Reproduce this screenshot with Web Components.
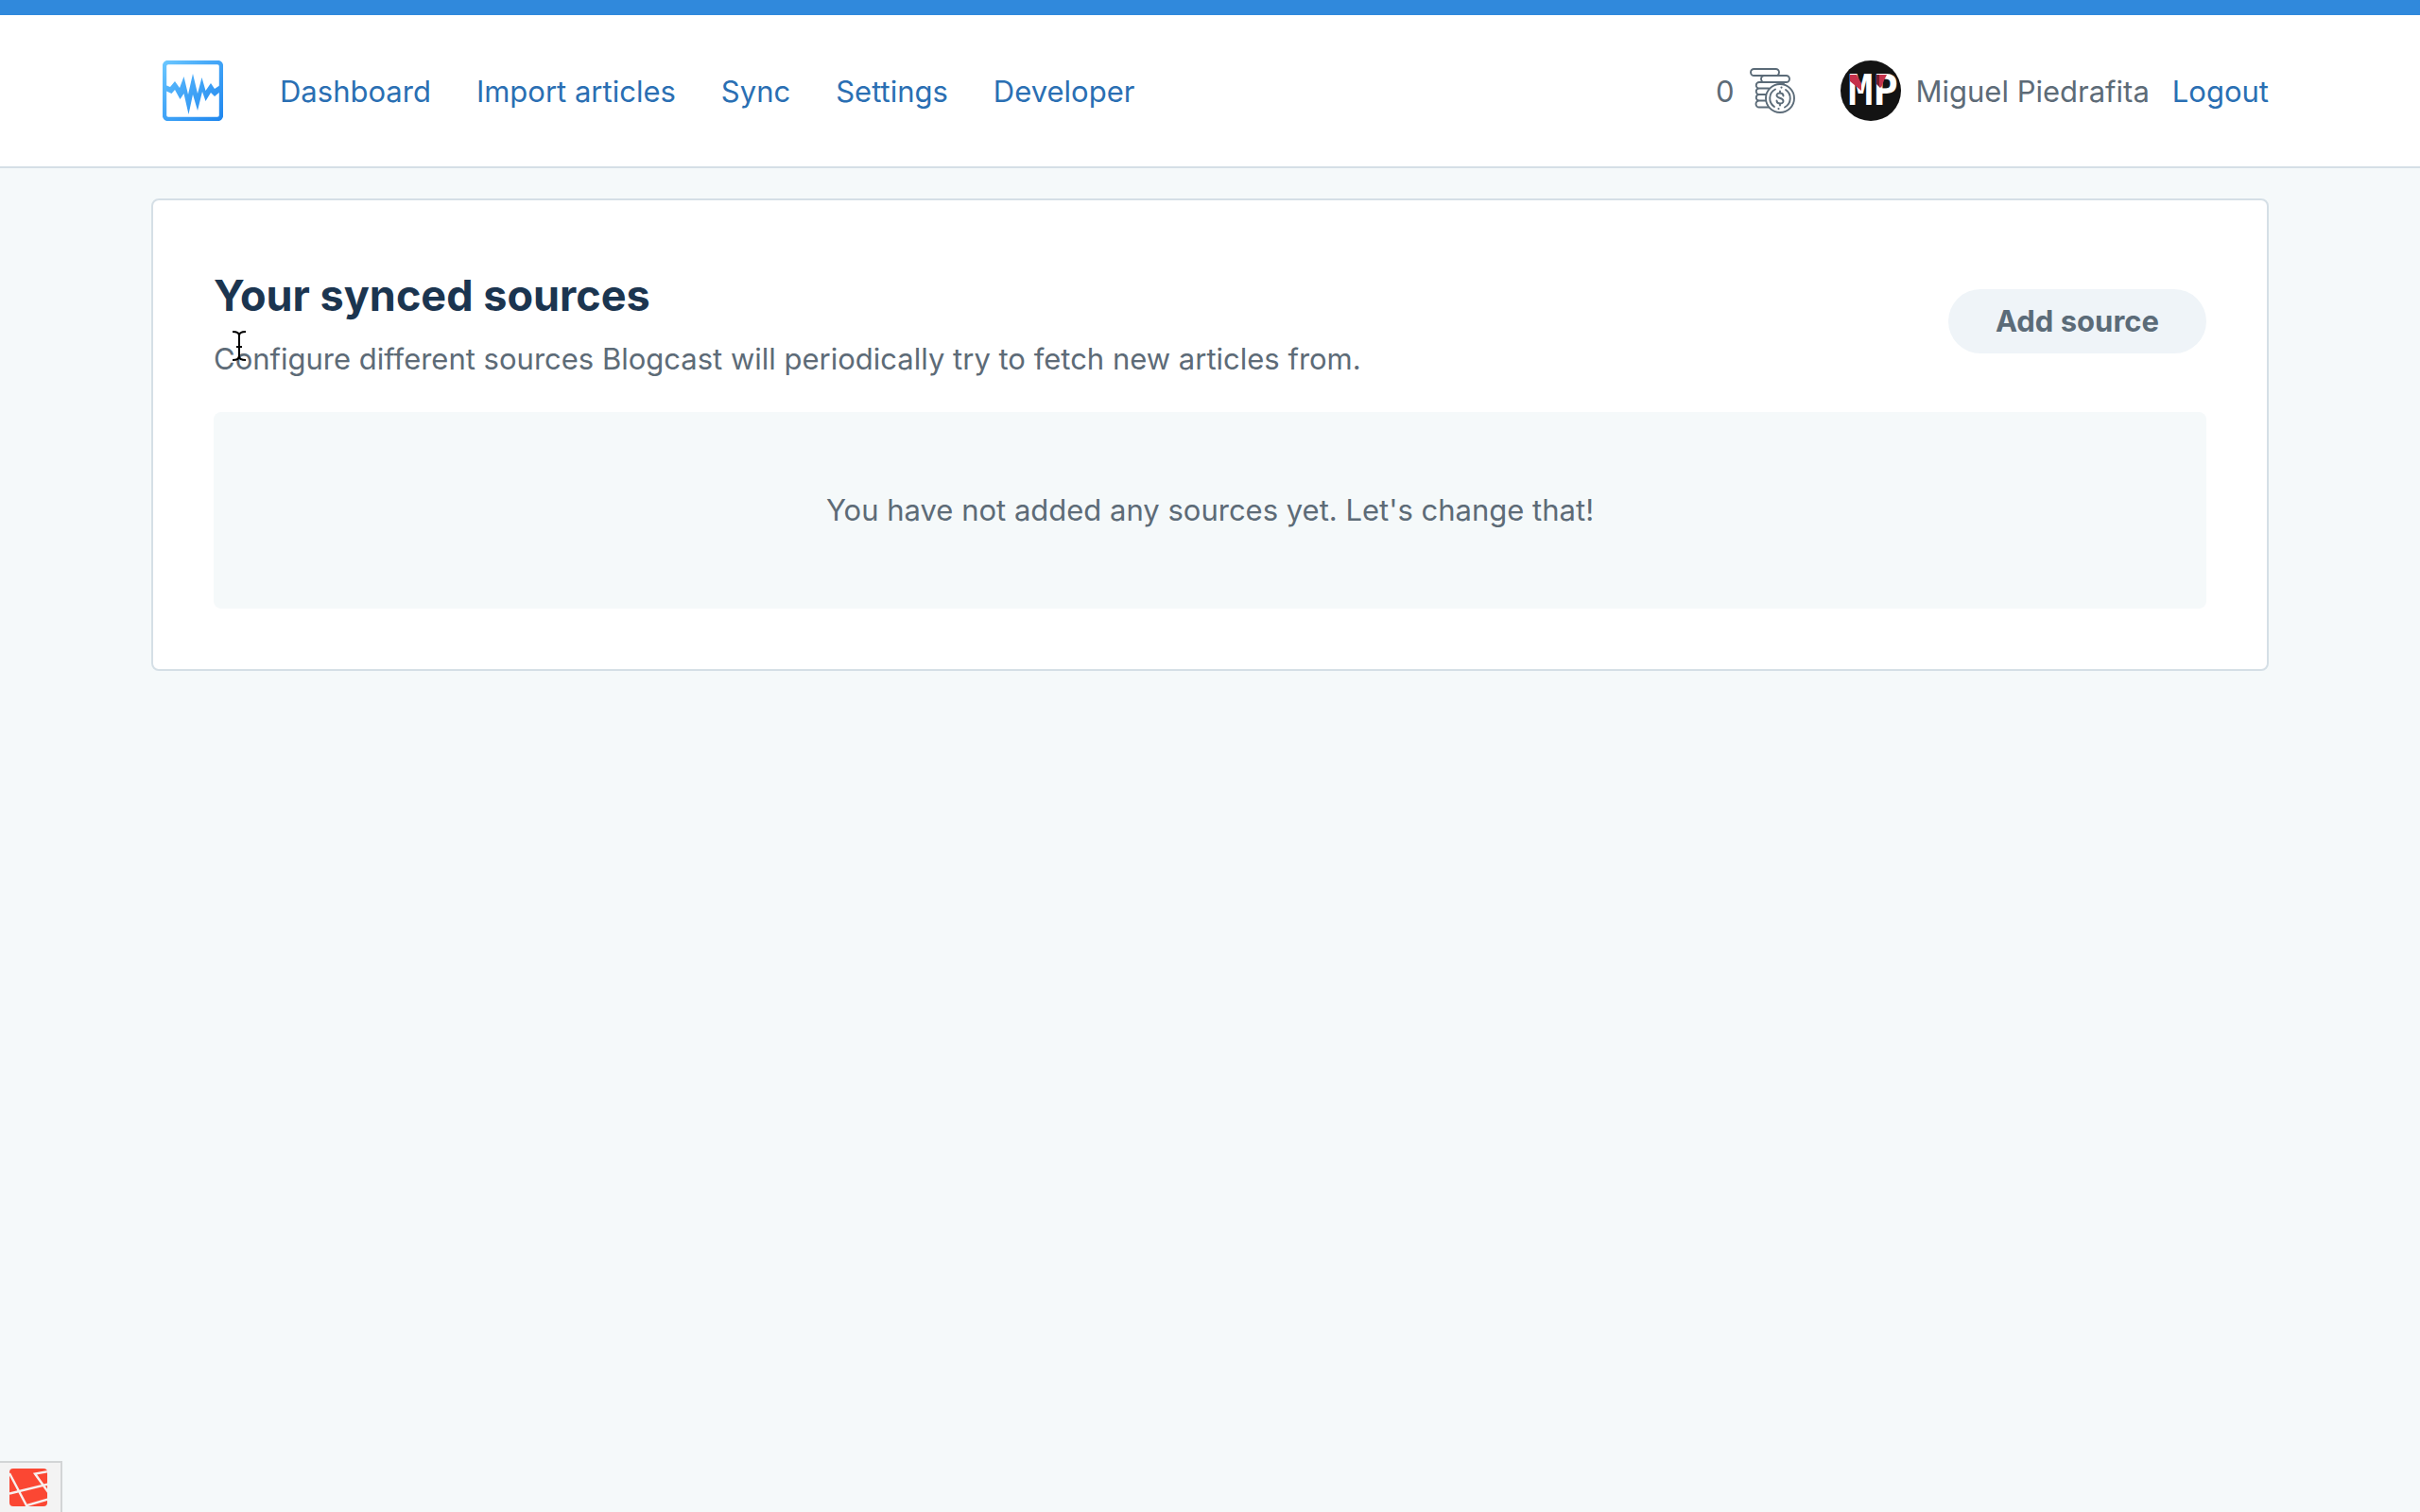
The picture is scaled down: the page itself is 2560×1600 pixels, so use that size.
<!DOCTYPE html>
<html lang="en">
<head>
<meta charset="utf-8">
<title>Blogcast</title>
<style>
html, body { margin: 0; }
body { font-family: Inter, "Liberation Sans", sans-serif; font-size: 31px; line-height: 48px; color: #5d6b77; background: #f5f9fa; }
</style>
</head>
<body>
<blog-app></blog-app>
<script>
const define = (name, markup) => {
  const template = document.createElement('template');
  template.innerHTML = markup;
  customElements.define(name, class extends HTMLElement {
    constructor() {
      super();
      this.attachShadow({ mode: 'open' }).append(template.content.cloneNode(true));
    }
  });
};

define('brand-logo', `
<style>:host{display:block;padding:0 12px} a,svg{display:block}</style>
<a href="#" aria-label="Home"><svg width="64" height="64" viewBox="0 0 64 64" fill="none">
<defs><linearGradient id="g" x1="0" y1="0" x2="64" y2="64" gradientUnits="userSpaceOnUse"><stop offset="0" stop-color="#6cc8ff"/><stop offset=".4" stop-color="#47a9f8"/><stop offset="1" stop-color="#1f86ee"/></linearGradient></defs>
<rect x="2" y="2" width="60" height="60" rx="4" stroke="url(#g)" stroke-width="4.400"/>
<path fill="url(#g)" d="M3 26L8 28L13 22L18 29L22.500 17L27 36L32 14L37 35L41.500 18L45.500 32L51 24L55 30L61 26V33L55 38L51 34L45.500 43L42 33L37 53L32 36L27.500 57L22.500 35L18.500 41L13 31L9.500 35L3 32Z"/></svg></a>`);

define('nav-link', `
<style>:host{display:block} a{color:#2a6fb3;text-decoration:none;white-space:nowrap}</style>
<a href="#"><slot></slot></a>`);

define('coin-icon', `
<style>:host,svg{display:block}</style>
<svg width="48" height="48" viewBox="0 0 48 48" fill="none" stroke="#5b6b78" stroke-width="1.900" stroke-linecap="round" stroke-linejoin="round" aria-hidden="true">
<rect x="1" y="1" width="30" height="7" rx="3.500"/>
<rect x="12" y="8" width="30" height="7" rx="3.500"/>
<path d="M17 15H10a3.200 3.200 0 0 0 0 6.500H20M18 21.500H10a3.200 3.200 0 0 0 0 6.500H17M17 28H10a3.200 3.200 0 0 0 0 6.500H18M18 34.500H10a3.200 3.200 0 0 0 0 7H23M28 15l8 1"/>
<circle cx="32" cy="32" r="15" fill="#fff"/>
<path d="M27 22.500A10.800 10.800 0 0 0 26 41M37 41.500A10.800 10.800 0 0 0 38 23"/>
<path d="M35.500 29.500C35.500 25.500 28.500 25.500 28.500 29C28.500 32.500 35.500 31 35.500 35C35.500 38.500 28.500 38.500 28.500 34.500M32 24.500V26.500M32 37.500V39.500"/>
<path stroke-width="2.200" d="M33.500 20.500V20.600M30.500 43V43.100"/></svg>`);

define('user-avatar', `
<style>:host,svg{display:block}</style>
<svg width="64" height="64" viewBox="0 0 64 64" role="img" aria-label="Profile picture">
<circle cx="32" cy="32" r="32" fill="#131313"/>
<text x="8" y="47" fill="#fff" font-family="DejaVu Sans Mono, monospace" font-weight="700" font-size="44">MP</text>
<path fill="#c5314b" d="M10 15h7l5 9v8L10 22Z"/>
<path fill="#731f2c" d="M38 15h4v14l-4-4Z"/><path fill="#c5314b" d="M41 15h8l-3 6-3 8-2-2Z"/></svg>`);

define('site-header', `
<style>
:host{display:block;border-top:16px solid #3089dc;border-bottom:2px solid #d5dfe6;background:#fff}
header{display:flex;align-items:center;justify-content:space-between;padding:48px 160px}
nav,.account{display:flex;align-items:center;gap:48px}
.credits{display:flex;align-items:center;gap:16px}
.user{display:flex;align-items:center;gap:24px}
.person{display:flex;align-items:center;gap:16px;white-space:nowrap}
nav-link,span{padding-top:2px}
</style>
<header>
<nav><brand-logo></brand-logo><nav-link>Dashboard</nav-link><nav-link>Import articles</nav-link><nav-link>Sync</nav-link><nav-link>Settings</nav-link><nav-link>Developer</nav-link></nav>
<div class="account">
<div class="credits"><span>0</span><coin-icon></coin-icon></div>
<div class="user"><div class="person"><user-avatar></user-avatar><span>Miguel Piedrafita</span></div><nav-link>Logout</nav-link></div>
</div>
</header>`);

define('pill-button', `
<style>:host{display:block} button{display:block;border:0;border-radius:34px;padding:10px 50px;background:#eff4f8;color:#5b6b78;font:inherit;font-weight:700;white-space:nowrap}</style>
<button type="button"><slot></slot></button>`);

define('empty-state', `
<style>:host{display:block;padding:80px 32px;border-radius:8px;background:#f5f9fa;text-align:center}</style>
<slot></slot>`);

define('source-card', `
<style>
:host{display:block;border:2px solid #d5dfe6;border-radius:8px;background:#fff;padding:64px}
.head{display:flex;align-items:center;justify-content:space-between;gap:32px;margin-bottom:32px}
.copy{display:flex;flex-direction:column;gap:6px}
h1,p{margin:0}
h1{font-size:45px;line-height:74px;font-weight:700;color:#1b3550}
</style>
<div class="head"><div class="copy"><h1><slot name="title"></slot></h1><p><slot name="description"></slot></p></div><slot name="action"></slot></div>
<slot></slot>`);

define('text-cursor', `
<style>:host{position:absolute;left:246px;top:350px;pointer-events:none} svg{display:block}</style>
<svg width="14" height="32" viewBox="0 0 14 32" fill="none" stroke="#000" stroke-width="2" aria-hidden="true"><path d="M0 1C4 1 7 2.500 7 5C7 2.500 10 1 14 1M7 5V27M0 31C4 31 7 29.500 7 27C7 29.500 10 31 14 31M4 17H10"/></svg>`);

define('debug-toggle', `
<style>:host{position:fixed;left:0;bottom:0} button{display:block;margin:0;padding:6px 14px 6px 10px;border:solid #d2d5d6;border-width:2px 2px 0 0;background:#f3f3f3} svg{display:block}</style>
<button type="button" aria-label="Open debug bar"><svg width="40" height="40" viewBox="0 0 40 40"><defs><clipPath id="c"><rect width="40" height="40" rx="4"/></clipPath></defs><g clip-path="url(#c)"><rect width="40" height="40" fill="#fb4733"/><path fill="none" stroke="#f8f0ee" stroke-width="2.400" d="M0 5L19 41M0 26.500L41 16.500M41 3L27 5.500L41 25M17 39.500L41 32.500"/></g></svg></button>`);

define('blog-app', `
<style>:host{display:block;min-height:100vh} main{padding:32px 160px}</style>
<site-header></site-header>
<main><source-card>
<span slot="title">Your synced sources</span>
<span slot="description">Configure different sources Blogcast will periodically try to fetch new articles from.</span>
<pill-button slot="action">Add source</pill-button>
<empty-state>You have not added any sources yet. Let's change that!</empty-state>
</source-card></main>
<text-cursor></text-cursor>
<debug-toggle></debug-toggle>`);
</script>
</body>
</html>
